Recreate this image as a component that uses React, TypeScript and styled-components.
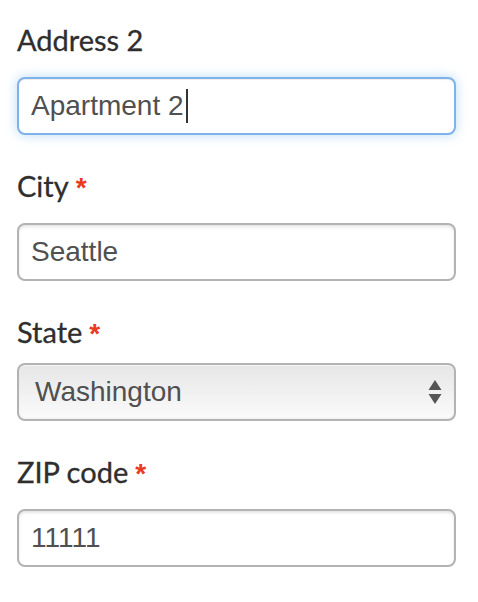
import React from 'react';
import styled, { createGlobalStyle, css } from 'styled-components';

const GlobalStyle = createGlobalStyle`
  html, body {
    margin: 0;
    padding: 0;
    background: #fff;
  }
`;

const Form = styled.div`
  padding: 22px 0 0 17px;
  width: 439px;
`;

const Group = styled.div`
  margin-bottom: 33px;
`;

const Label = styled.div<{ $gap: number }>`
  font-family: Lato, 'Open Sans', sans-serif;
  font-size: 29px;
  line-height: 35px;
  height: 35px;
  color: #2e2e2e;
  margin-bottom: ${p => p.$gap}px;
  -webkit-text-stroke: 0.3px #2e2e2e;
`;

const Required = styled.span`
  font-family: 'Liberation Sans', Arial, sans-serif;
  font-weight: bold;
  color: #ea3a22;
  margin-left: 7px;
  font-size: 28px;
  line-height: 0;
  -webkit-text-stroke: 0;
`;

const Box = styled.div<{ $focused?: boolean }>`
  box-sizing: border-box;
  height: 58px;
  display: flex;
  align-items: center;
  padding: 0 12px;
  border: 2px solid #b3b3b3;
  border-radius: 8px;
  background: #fff;
  box-shadow: inset 0 2px 3px rgba(0, 0, 0, 0.1);
  font-family: 'Liberation Sans', Arial, sans-serif;
  font-size: 28px;
  color: #505050;
  ${p =>
    p.$focused &&
    css`
      border-color: #7eb2ea;
      box-shadow: inset 0 1px 1px rgba(0, 0, 0, 0.075), 0 0 12px rgba(102, 175, 233, 0.45);
    `}
`;

const SelectBox = styled(Box)`
  justify-content: space-between;
  padding: 0 12px 0 16px;
  background: linear-gradient(#e6e6e6, #fbfbfb);
  box-shadow: inset 0 1px 0 rgba(255, 255, 255, 0.6), inset 0 -1px 2px rgba(0, 0, 0, 0.05);
`;

const Caret = styled.span`
  display: inline-block;
  width: 2px;
  height: 34px;
  background: #333;
  margin-left: 2px;
`;

const Arrows = () => (
  <svg width="14" height="26" viewBox="0 0 14 26">
    <path d="M7 1 L13.5 11 H0.5 Z" fill="#555" />
    <path d="M7 25 L13.5 15 H0.5 Z" fill="#555" />
  </svg>
);

type FieldProps = { label: string; required?: boolean; gap?: number; children: React.ReactNode };

const Field = ({ label, required, gap = 20, children }: FieldProps) => (
  <Group>
    <Label $gap={gap}>
      {label}
      {required && <Required>*</Required>}
    </Label>
    {children}
  </Group>
);

const App = () => (
  <>
    <GlobalStyle />
    <Form>
      <Field label="Address 2">
        <Box $focused>
          Apartment 2<Caret />
        </Box>
      </Field>
      <Field label="City" required>
        <Box>Seattle</Box>
      </Field>
      <Field label="State" required gap={14}>
        <SelectBox>
          Washington
          <Arrows />
        </SelectBox>
      </Field>
      <Field label="ZIP code" required>
        <Box>11111</Box>
      </Field>
    </Form>
  </>
);

export default App;
